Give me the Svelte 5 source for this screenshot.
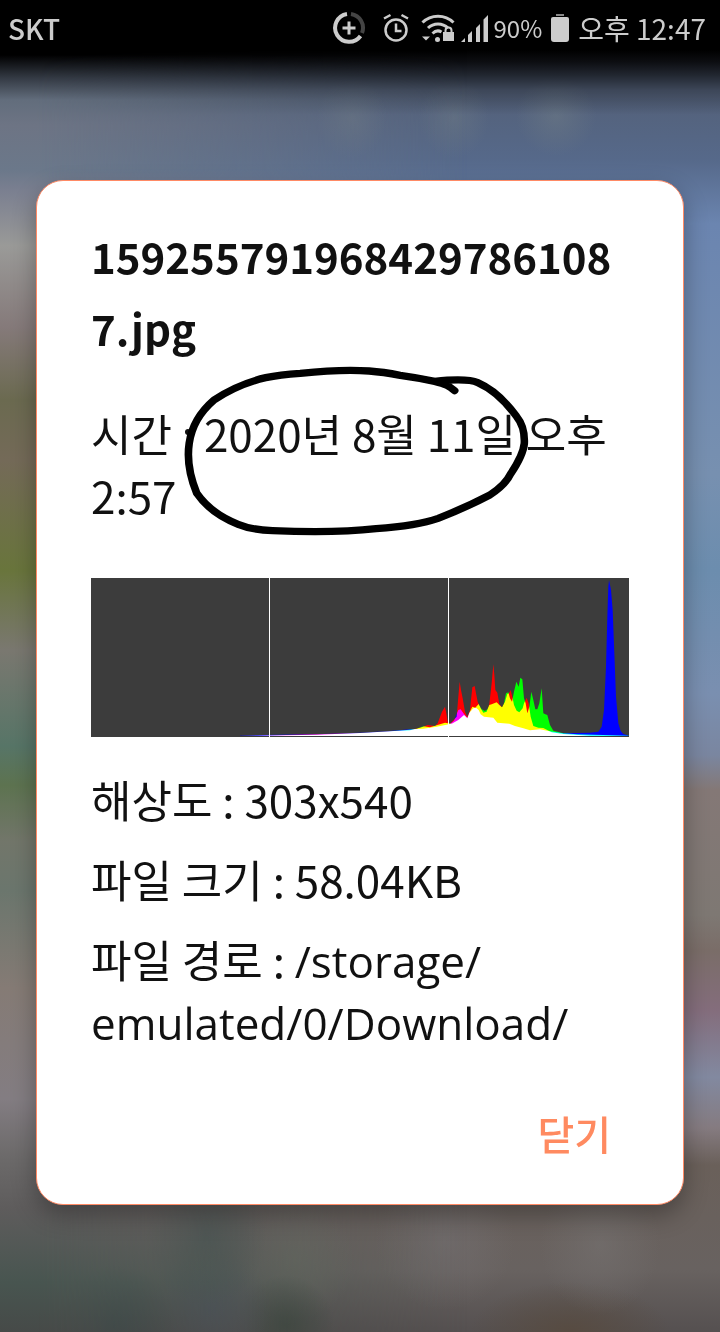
<svelte:options runes={true} />

<script lang="ts">
	const filename = '1592557919684297861087.jpg';

	const details = [
		{ label: '해상도', value: ['303x540'], path: false },
		{ label: '파일 크기', value: ['58.04KB'], path: false },
		{ label: '파일 경로', value: ['/storage/', 'emulated/', '0/', 'Download/'], path: true },
	];

	// Channel outlines, blended together below so overlaps mix like light
	const channels = [
		{
			color: '#f00',
			points: '-400 497 -220 493 -90 489 0 484 60 481 95 472 113 465 135 468 143 460 156 425 165 410 169 430 173 455 180 461 200 440 205 380 209 335 213 360 218 385 225 425 232 440 240 420 243 390 247 352 254 348 258 370 263 395 272 415 280 428 290 425 298 402 305 340 310 283 313 315 316 360 322 368 328 402 336 412 345 395 352 372 357 370 362 360 368 385 372 405 380 422 388 427 398 415 402 400 410 383 416 400 422 440 430 468 445 473 460 474 485 487 520 492 600 497',
		},
		{
			color: '#0f0',
			points: '-400 497 -220 494 -90 489 0 484 50 480 80 476 100 469 120 472 135 467 165 458 185 461 205 450 222 435 232 445 238 428 247 410 256 413 266 402 275 418 285 423 292 418 298 405 305 403 320 397 328 405 336 412 342 400 348 370 355 367 360 385 366 395 372 365 379 335 386 350 391 323 397 328 402 385 407 400 412 430 418 410 424 365 430 390 436 418 442 418 448 400 455 355 460 430 466 433 472 435 480 465 490 482 520 490 560 493 717 497',
		},
		{
			color: '#00f',
			points: '-450 497 -380 495 -220 493 -90 488 0 483 60 478 100 476 140 470 180 462 192 452 200 432 205 420 212 418 222 432 232 443 238 428 250 415 258 413 266 420 272 433 282 440 310 443 322 458 358 461 375 468 400 475 420 481 450 478 475 483 520 490 600 488 625 485 635 470 642 420 648 290 652 140 655 50 657 30 663 60 668 120 673 250 678 380 685 460 692 483 700 492 717 497',
		},
	];

	let open = $state(true);
</script>

<main>
	<div class="backdrop"></div>

	<header>
		<span class="carrier">SKT</span>
		<svg class="saver" width="34" height="34" viewBox="0 0 34 34" fill="none" stroke-width="4" aria-hidden="true">
			<path d="M19 3A14 14 0 0 1 30 22" stroke="#444" />
			<path d="M15 3A14 14 0 1 0 28.500 25" stroke="#ccc" />
			<path d="M17 10.500V23.500M10.500 17H23.500" stroke="#ccc" stroke-width="3" />
		</svg>
		<svg class="alarm" width="26" height="30" viewBox="0 0 26 30" fill="none" stroke="#ccc" stroke-width="2.500" aria-hidden="true">
			<circle cx="13" cy="17" r="10.500" />
			<path d="M13 10.500V18H18.500M1 5.500L7.500 2M18.500 2L25 5.500" />
		</svg>
		<svg class="wifi" width="34" height="30" viewBox="0 0 34 30" fill="none" stroke="#ccc" stroke-width="3" aria-hidden="true">
			<path d="M1.500 9.500C10 1 24 1 32.500 9.500M7 15C12.500 9.500 21.500 9.500 27 15M11.500 20.500C14.500 17.500 18 17.500 20.500 19" />
			<circle cx="16.500" cy="26.500" r="2.500" fill="#ccc" stroke="none" />
			<path d="M1 23.500H9L5 27.500ZM22 19H33V28H22Z" fill="#ccc" stroke="none" />
			<path d="M24.500 20V17.500A3 3 0 0 1 30.500 17.500V20" stroke-width="2" />
		</svg>
		<svg class="signal" width="27" height="28" viewBox="0 0 27 28" fill="#ccc" aria-hidden="true">
			<path d="M0 28L4 24V28ZM7 21L11 17V28H7ZM15 14L19 10V28H15ZM22.500 5.500L27 1V28H22.500Z" />
		</svg>
		<span class="level">90%</span>
		<svg class="battery" width="18" height="28" viewBox="0 0 18 28" fill="#ccc" aria-hidden="true">
			<path d="M5 0H13V2H5Z" fill="#888" />
			<path d="M0 5Q0 3 2 3H16Q18 3 18 5V25Q18 28 15 28H3Q0 28 0 25Z" />
		</svg>
		<span>오후 12:47</span>
	</header>

	{#if open}
		<section class="dialog" role="dialog" aria-labelledby="filename">
			<h1 id="filename">{filename}</h1>

			<p class="taken">
				시간 : 2020년 8월 11일 오후 2:57
				<svg class="marker" width="362" height="172" viewBox="300 435 1050 516" preserveAspectRatio="none" aria-hidden="true">
					<path d="M1088 512C1072 498 1062 492 1030 484Q980 473 930 466Q880 456 840 453Q760 447 640 460Q580 464 540 473Q460 492 390 540Q328 595 318 670Q308 740 340 820Q380 880 460 913Q500 930 560 932Q740 940 860 926Q980 917 1040 895Q1120 863 1190 825Q1235 795 1250 762Q1287 705 1290 670Q1292 620 1268 590Q1215 515 1155 488Q1125 474 1030 484" />
				</svg>
			</p>

			<svg class="histogram" viewBox="0 0 1614 477" role="img" aria-label="RGB">
				<rect width="1614" height="477" fill="#3c3c3c" />
				<g class="channels" transform="translate(897 -24)">
					{#each channels as channel}
						<polygon points={`${channel.points} 717 498 -450 498`} fill={channel.color} />
					{/each}
				</g>
				<path d="M534 0H537V477H534ZM1071 0H1074V477H1071Z" fill="#fff" />
			</svg>

			{#each details as row}
				<p>{row.label} : <span class:path={row.path}>{#each row.value as part}{part}<wbr />{/each}</span></p>
			{/each}

			<button type="button" onclick={() => (open = false)}>닫기</button>
		</section>
	{/if}
</main>

<style>
	:global(body) {
		margin: 0;
		background: #555;
	}
	main {
		position: relative;
		box-sizing: border-box;
		min-height: 100vh;
		overflow: hidden;
		isolation: isolate;
		font-family: 'Noto Sans CJK KR', sans-serif;
		font-size: 44px;
		line-height: 62px;
		color: #111;
	}

	/* out-of-focus photo behind the dialog */
	.backdrop {
		position: absolute;
		inset: 0;
		z-index: -1;
		background:
			linear-gradient(#000 50px, #0d0e12 62px, #0009 75px, #0004 90px, #0000 115px),
			radial-gradient(35px 40px at 352px 118px, #6b788588, #6b788500),
			radial-gradient(35px 40px at 454px 118px, #6b788588, #6b788500),
			radial-gradient(40px 40px at 556px 116px, #6b788599, #6b788500),
			radial-gradient(60px 70px at 206px 1235px, #43524f, #43524f00),
			radial-gradient(60px 60px at 115px 1325px, #2f464a, #2f464a00),
			radial-gradient(60px 60px at 210px 1310px, #525662, #52566200),
			radial-gradient(50px 50px at 285px 1325px, #3e473e, #3e473e00),
			radial-gradient(60px 60px at 295px 1260px, #6b6a62, #6b6a6200),
			radial-gradient(70px 70px at 445px 1240px, #74707299, #74707200),
			radial-gradient(60px 70px at 600px 1245px, #75717099, #75717000),
			radial-gradient(100px 50px at 570px 1332px, #574b41, #574b4100),
			linear-gradient(#536078 90px, #56698a 160px, #6b85b0 224px, #7790b0 474px, #6c8dae 570px, #7a8fb0 694px, #7a86a0 755px, #847876 790px, #7e7873 915px, #7a6d68 950px, #846d7c 1010px, #8289a0 1077px, #857b80 1128px, #6a605a 1165px, #686260 1270px, #555050 1332px);
	}
	.backdrop::before {
		content: '';
		position: absolute;
		inset: 0;
		background: linear-gradient(#000 55px, #343a44 78px, #626d7c 100px, #6d7484 125px, #6b788a 170px, #7a7f90 190px, #9a9a98 246px, #857a7a 327px, #6b6a50 400px, #746a58 460px, #69753c 570px, #7a7870 650px, #577567 746px, #5d7350 785px, #72766a 841px, #6b766d 890px, #857b75 988px, #837d82 1099px, #6c6a6a 1157px, #5e5c5c 1209px, #485550 1282px, #464a48 1332px);
		mask-image: linear-gradient(90deg, #000 5%, transparent 65%);
		z-index: -1;
	}

	header {
		display: flex;
		align-items: center;
		height: 56px;
		padding: 0 14px 0 8px;
		font-size: 28px;
		line-height: 56px;
		color: #ccc;
	}
	header svg {
		flex: none;
	}
	.carrier {
		margin-right: auto;
		font-weight: 500;
	}
	.saver {
		margin-right: 17px;
	}
	.alarm {
		margin-right: 12px;
	}
	.wifi {
		margin-right: 6px;
	}
	.signal {
		margin-right: 6px;
	}
	.level {
		font-size: 24px;
	}
	.battery {
		margin: 0 9px;
	}

	.dialog {
		margin: 124px 36px;
		padding: 39px 54px 40px;
		border: 1px solid #ff8a65;
		border-radius: 27px;
		background: #fff;
		box-shadow: 0 10px 24px rgba(0, 0, 0, 0.3);
	}
	h1 {
		margin: 0 0 38px;
		font-size: 42px;
		line-height: 72px;
		font-weight: 700;
		overflow-wrap: anywhere;
	}
	p {
		margin: 0 0 18px;
		word-break: keep-all;
	}
	.path {
		font-family: 'Open Sans', sans-serif;
		line-height: 1;
	}
	.taken {
		position: relative;
		margin-bottom: 52px;
	}
	.marker {
		position: absolute;
		left: 92px;
		top: -37px;
		fill: none;
		stroke: #000;
		stroke-width: 22;
		stroke-linecap: round;
		stroke-linejoin: round;
	}
	.histogram {
		display: block;
		width: 100%;
		margin-bottom: 31px;
	}
	.channels {
		isolation: isolate;
	}
	.channels polygon {
		mix-blend-mode: screen;
	}
	button {
		display: block;
		margin: 50px 0 0 auto;
		padding: 0 18px;
		border: 0;
		background: none;
		font-family: inherit;
		font-size: 40px;
		font-weight: 500;
		line-height: 62px;
		color: #ff8a60;
		cursor: pointer;
	}
</style>
